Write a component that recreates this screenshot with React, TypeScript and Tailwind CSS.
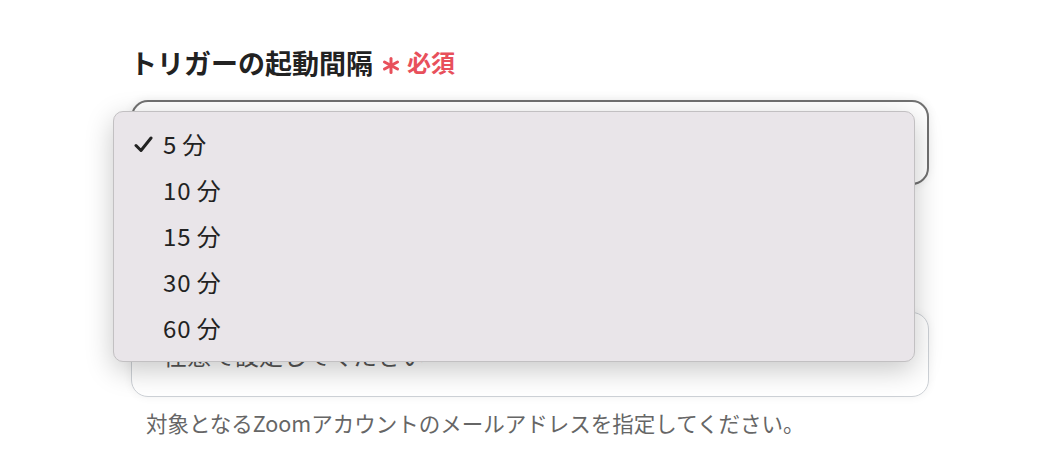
import React from "react";

const items = ["5", "10", "15", "30", "60"];

export default function App() {
  return (
    <div
      className="w-[1045px] h-[476px] bg-white overflow-hidden"
      style={{ fontFamily: '"Noto Sans CJK JP", "Noto Sans", sans-serif' }}
    >
      <div className="pl-[131px] pt-[43px] w-[798px] box-content">
        <div className="flex items-center h-[38px] -ml-[1px]">
          <span className="text-[27px] font-bold text-[#222] leading-none">トリガーの起動間隔</span>
          <span className="ml-[9px] text-[24px] text-[#e8505b] leading-none flex items-center gap-[7px]">
            <svg width="18" height="17" viewBox="0 0 18 17" className="mt-[7px]">
              <g stroke="#e8505b" strokeWidth="3" strokeLinecap="round">
                <line x1="9" y1="1.5" x2="9" y2="15.5" />
                <line x1="2.5" y1="5" x2="15.5" y2="12" />
                <line x1="2.5" y1="12" x2="15.5" y2="5" />
              </g>
            </svg>
            <span className="font-bold">必須</span>
          </span>
        </div>
        <div className="relative mt-[19px]">
          <div className="h-[85px] rounded-[17px] border-2 border-[#717171] bg-white shadow-[0_0_10px_rgba(0,0,0,0.08)]" />
          <div className="absolute left-[-18px] top-[11px] w-[802px] h-[251px] rounded-[10px] border border-[#c2c0c2] bg-[#e9e5e9] shadow-[0_8px_28px_rgba(0,0,0,0.22)] z-10 pt-[9px] pb-[13px]">
            {items.map((it, i) => (
              <div key={it} className="h-[46px] flex items-center pl-[20px]">
                <span className="w-[29px] flex items-center">
                  {i === 0 && (
                    <svg width="19" height="17" viewBox="0 0 19 17">
                      <path d="M2 9.5 L7 14.5 L17 2" fill="none" stroke="#222" strokeWidth="3" strokeLinecap="round" strokeLinejoin="round" />
                    </svg>
                  )}
                </span>
                <span className="text-[24px] text-[#222] leading-none flex items-center gap-[5px]">
                  <span className="tracking-[1px]">{it}</span>
                  <span>分</span>
                </span>
              </div>
            ))}
          </div>
          <div className="mt-[127px] h-[85px] rounded-[17px] border-[1.5px] border-[#cdd1d6] bg-white shadow-[0_0_10px_rgba(0,0,0,0.06)] flex items-center pl-[31px]">
            <span className="text-[24px] text-[#555] leading-none">任意で設定してください</span>
          </div>
          <div className="mt-[15px] pl-[15px] text-[21.5px] text-[#666] leading-none">
            対象となるZoomアカウントのメールアドレスを指定してください。
          </div>
        </div>
      </div>
    </div>
  );
}
